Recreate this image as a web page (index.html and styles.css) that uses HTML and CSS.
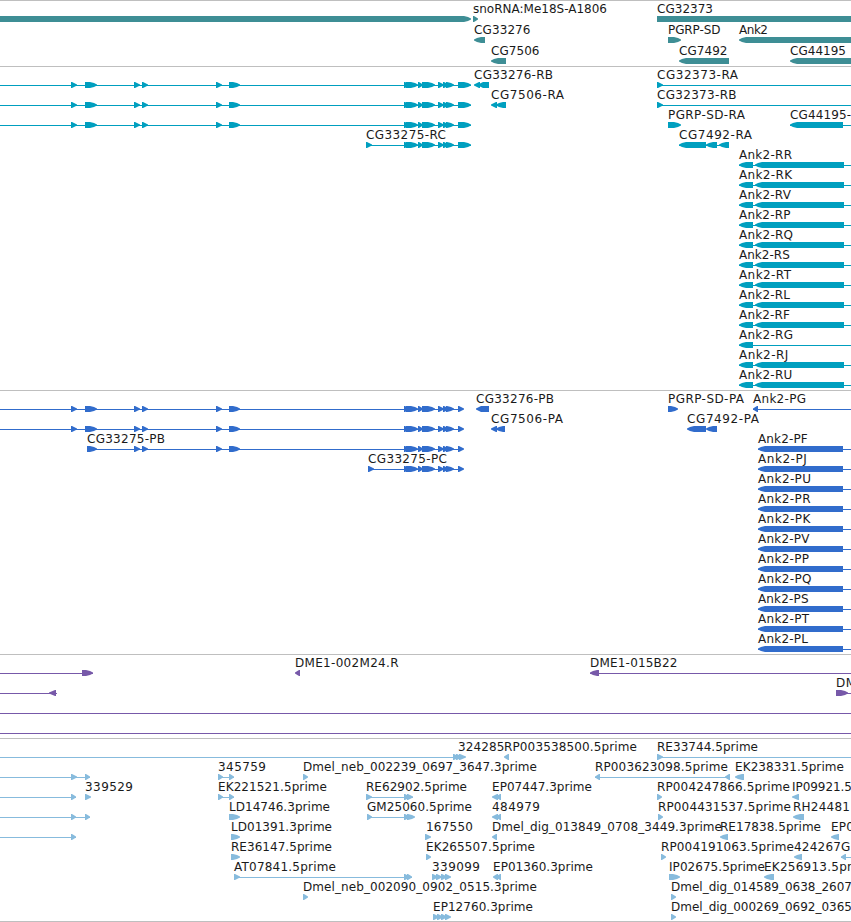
FILE: index.html
```html
<!DOCTYPE html>
<html lang="en">
<head>
  <meta charset="UTF-8" />
  <meta name="viewport" content="width=device-width, initial-scale=1.0" />
  <title>Genome Browser</title>
  <link rel="stylesheet" href="styles.css">
</head>
<body>
  <main class="browser">
    <section class="track track-gene" id="genes"></section>
    <section class="track track-transcript" id="transcripts"></section>
    <section class="track track-protein" id="proteins"></section>
    <section class="track track-bac" id="bacs"></section>
    <section class="track track-est" id="ests"></section>
  </main>
  <script src="tracks.js"></script>
</body>
</html>
```

FILE: styles.css
```css
body {
  margin: 0;
  background-color: #fff;
  overflow: hidden;
}

.browser {
  display: flex;
  flex-direction: column;
  width: 851px;
  height: 922px;
  overflow: hidden;
}

.track {
  display: flex;
  flex-direction: column;
  border-top: 1px solid #bfbfbf;
  padding-bottom: 3px;
}

.row {
  display: block;
  flex: none;
  width: 851px;
  height: 20px;
  overflow: visible;
}

.row text {
  font-family: "DejaVu Sans", sans-serif;
  font-size: 12px;
  fill: #1a1a1a;
}

/* Track colours */
.track-gene {
  fill: #3e8e95;
  padding-bottom: 2px;
}

.track-gene .row {
  height: 21px;
}

.track-transcript {
  fill: #009fbf;
}

.track-protein {
  fill: #316ccc;
}

.track-bac {
  fill: #7759a9;
}

.track-est {
  fill: #87bbdd;
  padding-bottom: 2px;
  border-bottom: 1px solid #bfbfbf;
}
```

FILE: tracks.js
```js
const SVG = 'http://www.w3.org/2000/svg';
const END = 870; // past the right edge

// Items in a row:
//   '>' / '<' / '='  arrow right, arrow left, plain bar: [type, x1, x2]
//   '-'              intron line: ['-', x1, x2]
//   anything else    label: [text, x1, x2], x2 is where the text ends
const leftExons = [['>', 71, 77], ['>', 85, 97]];
const midExons = [['>', 134, 140], ['>', 142, 148], ['>', 216, 222], ['>', 229, 240]];
const cluster = [
  ['>', 404, 410], ['>', 406, 418], ['>', 418, 423], ['>', 422, 435],
  ['>', 438, 444], ['>', 443, 449], ['>', 446, 454]
];
const rnaEnd = [...cluster, ['>', 458, 471]];
const protEnd = [...cluster, ['>', 458, 464]];
const rna = [['-', 0, 471], ...leftExons, ...midExons, ...rnaEnd];
const prot = [['-', 0, 463], ...leftExons, ...midExons, ...protEnd];

const ank2R = (name, end) => [[name, 739, end], ['-', 739, END], ['<', 739, 753], ['<', 755, 844]];
const ank2P = (name, end) => [[name, 758, end], ['-', 758, END], ['<', 758, 843]];

const tracks = {
  genes: [
    [['>', 0, 471], ['>', 473, 478], ['snoRNA:Me18S-A1806', 473, 607], ['CG32373', 657, 713], ['=', 657, END]],
    [['CG33276', 474, 530.5], ['<', 474, 485], ['PGRP-SD', 668, 720.5], ['>', 668, 681], ['Ank2', 739, 768], ['<', 739, END]],
    [['CG7506', 491, 539.5], ['<', 491, 506], ['CG7492', 679, 727.5], ['<', 679, 729], ['CG44195', 790, 846], ['<', 790, END]]
  ],
  transcripts: [
    [...rna, ['CG33276-RB', 474, 553], ['<', 474, 480], ['<', 478, 484], ['<', 480, 486], ['=', 483, 489],
      ['CG32373-RA', 657, 738], ['-', 657, END], ['>', 657, 663]],
    [...rna, ['CG7506-RA', 491, 564], ['<', 491, 497], ['<', 496, 506],
      ['CG32373-RB', 657, 736.5], ['-', 657, END], ['>', 657, 663]],
    [...rna, ['PGRP-SD-RA', 668, 745], ['>', 668, 681], ['CG44195-', 790, 851], ['-', 790, END], ['<', 790, 843]],
    [['CG33275-RC', 366, 446], ['-', 366, 471], ['>', 366, 372], ...rnaEnd,
      ['CG7492-RA', 679, 752], ['-', 679, 729], ['<', 679, 706], ['<', 706, 717], ['<', 719, 729]],
    ank2R('Ank2-RR', 792),
    ank2R('Ank2-RK', 792),
    ank2R('Ank2-RV', 791),
    ank2R('Ank2-RP', 790.5),
    ank2R('Ank2-RQ', 793),
    ank2R('Ank2-RS', 789.8),
    ank2R('Ank2-RT', 791),
    ank2R('Ank2-RL', 790),
    ank2R('Ank2-RF', 790),
    [['Ank2-RG', 739, 793], ['-', 739, END], ['<', 739, 753]],
    ank2R('Ank2-RJ', 788.3),
    ank2R('Ank2-RU', 792.3)
  ],
  proteins: [
    [...prot, ['CG33276-PB', 476, 554], ['<', 476, 482], ['<', 478, 484], ['=', 482, 489],
      ['PGRP-SD-PA', 668, 744], ['>', 668, 678], ['Ank2-PG', 753, 806], ['-', 753, END], ['<', 753, 758]],
    [...prot, ['CG7506-PA', 491, 563], ['<', 491, 497], ['<', 496, 505],
      ['CG7492-PA', 687, 759], ['<', 687, 706], ['<', 706, 717]],
    [['CG33275-PB', 87, 165], ['-', 87, 463], ['>', 87, 97], ...midExons, ...protEnd, ...ank2P('Ank2-PF', 807.7)],
    [['CG33275-PC', 368, 447], ['-', 368, 463], ['>', 368, 374], ...protEnd, ...ank2P('Ank2-PJ', 806.8)],
    ank2P('Ank2-PU', 811),
    ank2P('Ank2-PR', 810.5),
    ank2P('Ank2-PK', 810.3),
    ank2P('Ank2-PV', 809.5),
    ank2P('Ank2-PP', 809),
    ank2P('Ank2-PQ', 811.5),
    ank2P('Ank2-PS', 808.5),
    ank2P('Ank2-PT', 809),
    ank2P('Ank2-PL', 808)
  ],
  bacs: [
    [['-', 0, 93], ['>', 82, 93], ['DME1-002M24.R', 295, 398.5], ['<', 295, 300],
      ['DME1-015B22', 590, 677.5], ['-', 590, END], ['<', 590, 599]],
    [['-', 0, 57], ['<', 49, 56], ['DM', 836, 856], ['-', 836, END], ['>', 836, 848]],
    [['-', 0, END]],
    [['-', 0, END]]
  ],
  ests: [
    [['-', 0, 460], ['>', 453, 459], ['>', 456, 462], ['>', 459, 466], ['324285', 458, 504.5],
      ['RP003538500.5prime', 504, 637], ['<', 504, 509], ['RE33744.5prime', 657, 758], ['-', 657, END], ['>', 657, 663]],
    [['-', 0, 90], ['>', 71, 77], ['>', 85, 90], ['345759', 218, 266], ['-', 218, 234], ['>', 218, 223], ['>', 229, 234],
      ['Dmel_neb_002239_0697_3647.3prime', 303, 537], ['>', 303, 308],
      ['RP003623098.5prime', 595, 728], ['-', 595, 730], ['<', 595, 600], ['<', 725, 730],
      ['EK238331.5prime', 735, 844], ['<', 735, 744]],
    [['-', 0, 76], ['>', 71, 76], ['339529', 85, 133], ['>', 85, 91],
      ['EK221521.5prime', 218, 327], ['-', 218, 234], ['>', 218, 223], ['>', 229, 234],
      ['RE62902.5prime', 366, 467], ['-', 366, 413], ['>', 366, 372], ['>', 404, 410], ['>', 407, 413],
      ['EP07447.3prime', 492, 592], ['<', 492, 498], ['<', 496, 501],
      ['RP004247866.5prime', 657, 790], ['>', 657, 662], ['IP09921.5', 792, 852], ['<', 792, 799]],
    [['-', 0, 90], ['>', 71, 76], ['>', 85, 90], ['LD14746.3prime', 229, 330], ['>', 229, 240],
      ['GM25060.5prime', 367, 472], ['-', 367, 413], ['>', 367, 372], ['>', 404, 410], ['>', 407, 415],
      ['484979', 492, 540], ['<', 492, 498], ['<', 496, 501],
      ['RP004431537.5prime', 658, 791], ['>', 658, 663], ['RH24481', 793, 850], ['<', 793, 804]],
    [['-', 0, 76], ['>', 71, 76], ['LD01391.3prime', 231, 332], ['>', 231, 240],
      ['167550', 426, 473], ['>', 425, 431], ['Dmel_dig_013849_0708_3449.3prime', 492, 722], ['<', 492, 497],
      ['RE17838.5prime', 720, 821], ['<', 720, 728], ['EP0', 831, 854], ['<', 831, 839]],
    [['RE36147.5prime', 231, 332], ['>', 231, 240], ['EK265507.5prime', 426, 535], ['>', 426, 431],
      ['RP004191063.5prime', 661, 794], ['>', 661, 666], ['424267', 794, 841], ['<', 794, 802],
      ['G', 841, 850], ['-', 841, END], ['<', 841, 846]],
    [['AT07841.5prime', 234, 336], ['-', 234, 412], ['>', 234, 240], ['>', 404, 410], ['>', 407, 412],
      ['339099', 432, 480], ['>', 432, 438], ['>', 436, 442], ['>', 441, 447], ['>', 445, 451],
      ['EP01360.3prime', 493, 593], ['<', 493, 498], ['<', 496, 501],
      ['IP02675.5prime', 669, 765], ['>', 669, 680], ['EK256913.5pr', 764, 852], ['<', 764, 774]],
    [['Dmel_neb_002090_0902_0515.3prime', 303, 537], ['>', 303, 308],
      ['Dmel_dig_014589_0638_2607', 671, 852], ['>', 671, 676]],
    [['EP12760.3prime', 433, 533], ['>', 433, 439], ['>', 437, 443], ['>', 441, 447], ['>', 445, 451],
      ['Dmel_dig_000269_0692_0365', 671, 852], ['>', 671, 676]]
  ]
};

function make(tag, attrs) {
  const node = document.createElementNS(SVG, tag);
  for (const key in attrs) node.setAttribute(key, attrs[key]);
  return node;
}

// Bar with a pointed end; dir is 1 when the tip is on the right
function arrow(tail, tip, dir) {
  const width = Math.abs(tip - tail);
  if (width < 8) {
    return `M${tail} 15L${tail + dir} 15L${tip} 17.5V18.5L${tail + dir} 21H${tail}Z`;
  }
  const neck = tip - 7 * dir;
  const mid = tip - 3 * dir;
  return `M${tail} 15H${neck}L${mid} 16L${tip} 17.6V18.4L${mid} 20L${neck} 21H${tail}Z`;
}

function drawItem([type, x1, x2]) {
  if (type === '-') return make('rect', { x: x1, y: 18, width: x2 - x1, height: 1 });
  if (type === '=') return make('rect', { x: x1, y: 15, width: x2 - x1, height: 6 });
  if (type === '>') return make('path', { d: arrow(x1, x2, 1) });
  if (type === '<') return make('path', { d: arrow(x2, x1, -1) });
  const label = make('text', { x: x1, y: 12, textLength: x2 - x1 });
  label.textContent = type;
  return label;
}

for (const id in tracks) {
  const track = document.getElementById(id);
  for (const items of tracks[id]) {
    const row = make('svg', { class: 'row' });
    items.forEach(item => row.appendChild(drawItem(item)));
    track.appendChild(row);
  }
}
```
